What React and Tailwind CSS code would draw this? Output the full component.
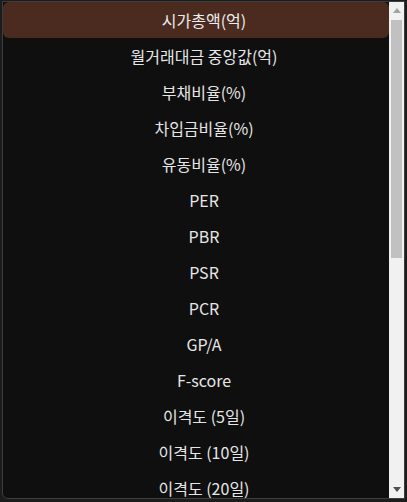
import React from "react";

const OPTIONS = [
  "시가총액(억)",
  "월거래대금 중앙값(억)",
  "부채비율(%)",
  "차입금비율(%)",
  "유동비율(%)",
  "PER",
  "PBR",
  "PSR",
  "PCR",
  "GP/A",
  "F-score",
  "이격도 (5일)",
  "이격도 (10일)",
  "이격도 (20일)",
  "이격도 (60일)",
  "이격도 (120일)",
  "RSI",
  "1개월 수익률(%)",
  "3개월 수익률(%)",
  "6개월 수익률(%)",
  "12개월 수익률(%)",
  "배당수익률(%)",
  "ROE(%)",
  "ROA(%)",
  "영업이익률(%)",
  "매출성장률(%)",
  "영업이익성장률(%)",
];

function ScrollBar() {
  return (
    <div className="w-[15px] shrink-0 h-full bg-[#f1f1f1] flex flex-col items-center">
      <div className="h-[17px] flex items-center justify-center">
        <svg width="8" height="5" viewBox="0 0 8 5">
          <polygon points="0,5 8,5 4,0" fill="#a3a3a3" />
        </svg>
      </div>
      <div className="mt-[1px] w-[11px] h-[238px] bg-[#c1c1c1]" />
      <div className="flex-1" />
      <div className="h-[17px] flex items-center justify-center">
        <svg width="8" height="5" viewBox="0 0 8 5">
          <polygon points="0,0 8,0 4,5" fill="#505050" />
        </svg>
      </div>
    </div>
  );
}

export default function App() {
  const selected = 0;
  return (
    <div className="w-[407px] h-[502px] bg-[#1c1c1c] pt-px px-[2px] pb-[3px]">
      <div
        className="h-full flex bg-[#0f0f0f] border border-[#3d3d3d] rounded-bl-md overflow-hidden"
        style={{ fontFamily: '"Noto Sans CJK KR", "Noto Sans", sans-serif' }}
      >
        <ul className="flex-1 overflow-hidden">
          {OPTIONS.map((label, i) => (
            <li
              key={label}
              className={
                i === selected
                  ? "h-9 pl-4 flex items-center justify-center rounded-md bg-[#4b2b1f] text-[16px] text-[#ececec]"
                  : "h-9 pl-4 flex items-center justify-center text-[16px] text-[#e6e6e6]"
              }
            >
              {label}
            </li>
          ))}
        </ul>
        <ScrollBar />
      </div>
    </div>
  );
}
